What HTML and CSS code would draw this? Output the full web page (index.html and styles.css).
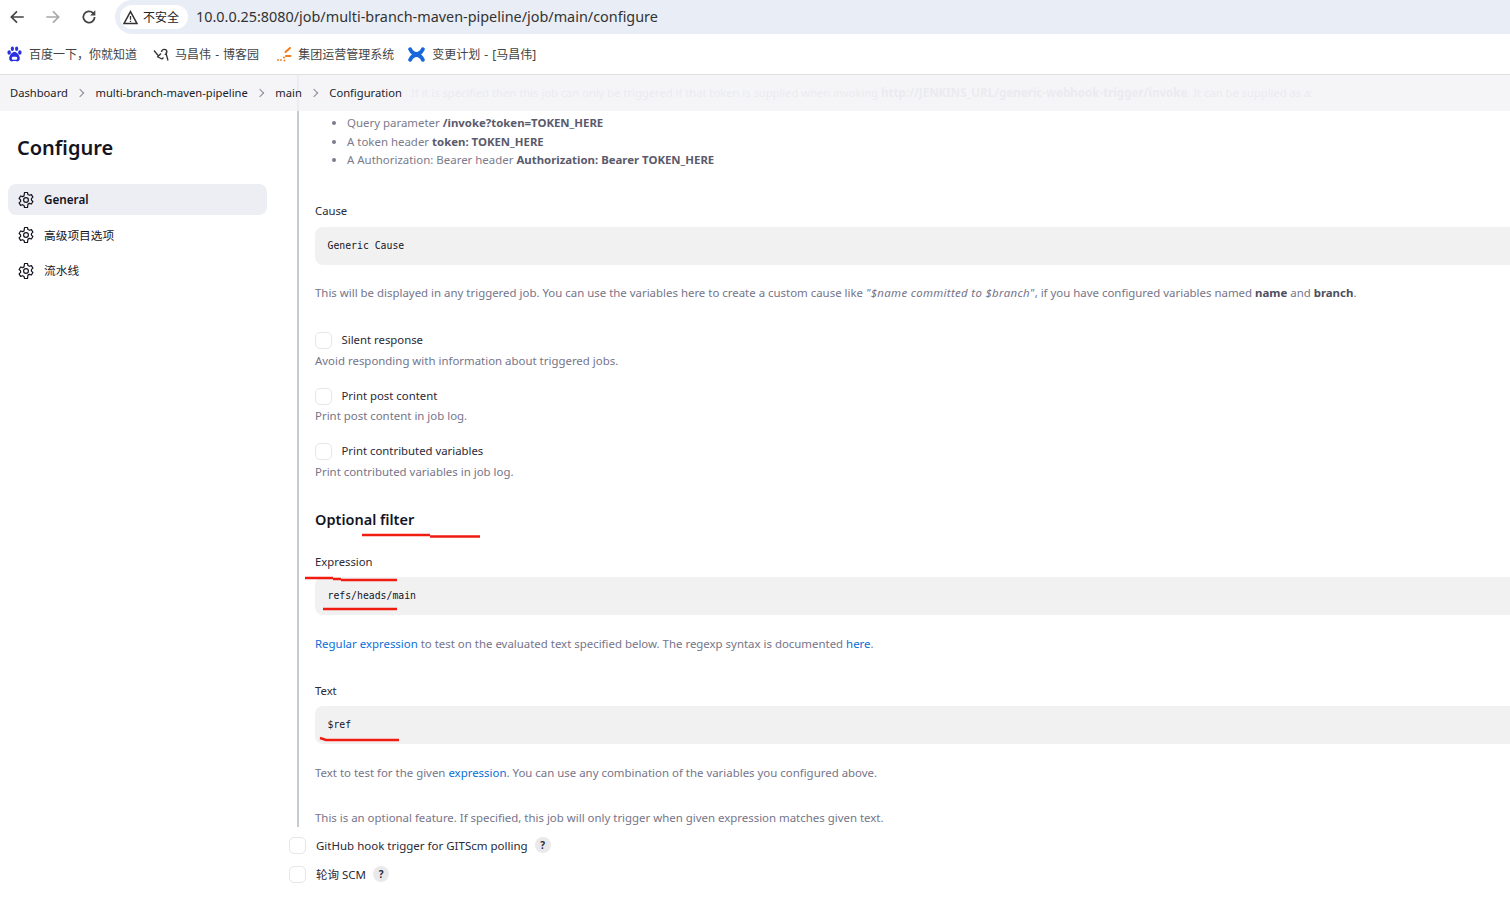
FILE: index.html
```html
<!DOCTYPE html>
<html lang="zh">
<head>
<meta charset="utf-8">
<title>main Config</title>
<link rel="stylesheet" href="styles.css">
</head>
<body>
<div class="toolbar">
  <div class="nav">
    <svg class="nav-ic" viewBox="0 0 16 16"><path d="M14 8H3M8 3 3 8l5 5" fill="none" stroke="#444" stroke-width="1.5"/></svg>
    <svg class="nav-ic" viewBox="0 0 16 16"><path d="M2 8h11M8 3l5 5-5 5" fill="none" stroke="#a8a8a8" stroke-width="1.5"/></svg>
    <svg class="nav-ic" viewBox="0 0 16 16"><path d="M13 8a5 5 0 1 1-1.500-3.600L13 6" fill="none" stroke="#444" stroke-width="1.600"/><path d="M13.600 2v4.600H9z" fill="#444"/></svg>
  </div>
  <div class="omnibox">
    <div class="chip">
      <svg class="warn" viewBox="0 0 14 14"><path d="M7 1.500 13 12.500H1z" fill="none" stroke="#333" stroke-width="1.400"/><path d="M7 5.500v3.600M7 10v1.200" stroke="#333" stroke-width="1.200"/></svg>
      <span>不安全</span>
    </div>
    <span class="url">10.0.0.25:8080/job/multi-branch-maven-pipeline/job/main/configure</span>
  </div>
</div>
<div class="bookmarks">
  <div class="bm bm-baidu">
    <svg class="bm-ic" viewBox="0 0 14 15"><g fill="#2932e1"><ellipse cx="2" cy="6" rx="1.600" ry="2.100"/><ellipse cx="5" cy="2.500" rx="1.500" ry="2.100"/><ellipse cx="9" cy="2.500" rx="1.500" ry="2.100"/><ellipse cx="12" cy="6" rx="1.600" ry="2.100"/><path d="M7 5.500c-2 0-5 3.500-5 6.200C2 14 4 14.800 5.200 14.400c1.200-.4 2.400-.4 3.600 0 1.200.4 3.200-.4 3.200-2.700C12 9 9 5.500 7 5.500z"/></g><rect x="4.500" y="10" width="5" height="3" rx="1.200" fill="#fff"/></svg>
    <span>百度一下，你就知道</span>
  </div>
  <div class="bm bm-blog">
    <svg class="bm-ic wide" viewBox="0 0 16 16"><path d="M1 4.500 5.500 10l2.500-2.500M8.500 6a2.700 2.700 0 1 1 5.400 0c0 1.200-1 2.300-2.200 2.600M12.800 6.500 15 14.500M4 10.500l5 2.500 1.500-1.500" fill="none" stroke="#333" stroke-width="1.300"/></svg>
    <span>马昌伟 - 博客园</span>
  </div>
  <div class="bm bm-ops">
    <svg class="bm-ic wide" viewBox="0 0 16 16"><g fill="none" stroke="#f07c1c" stroke-width="2" stroke-linecap="round"><path d="m9.500 6 4.500-4M10 10h4.500"/></g><g fill="#f07c1c"><circle cx="8" cy="11.500" r="1"/><circle cx="8.500" cy="14.500" r=".9"/><circle cx="5" cy="14" r=".9"/><circle cx="2" cy="14" r=".9"/></g></svg>
    <span>集团运营管理系统</span>
  </div>
  <div class="bm">
    <svg class="bm-ic large" viewBox="0 0 16 16"><path d="M2 3C5 9 11 9 14 3M2 13C5 7 11 7 14 13" fill="none" stroke="#1868db" stroke-width="3.600" stroke-linecap="round"/></svg>
    <span>变更计划 - [马昌伟]</span>
  </div>
</div>
<nav class="breadcrumb">
  <span>Dashboard</span><i class="sep"></i>
  <span>multi-branch-maven-pipeline</span><i class="sep"></i>
  <span>main</span><i class="sep"></i>
  <span>Configuration</span>
  <span class="ghost">If it is specified then this job can only be triggered if that token is supplied when invoking <b>http://JENKINS_URL/generic-webhook-trigger/invoke</b>. It can be supplied as a:</span>
</nav>
<div class="layout">
  <aside class="sidebar">
    <h1>Configure</h1>
    <ul class="side-menu">
      <li class="active">
        <svg class="gear" viewBox="0 0 24 24"><use href="#gear"/></svg>
        <span>General</span>
      </li>
      <li>
        <svg class="gear" viewBox="0 0 24 24"><use href="#gear"/></svg>
        <span>高级项目选项</span>
      </li>
      <li>
        <svg class="gear" viewBox="0 0 24 24"><use href="#gear"/></svg>
        <span>流水线</span>
      </li>
    </ul>
  </aside>
  <main class="main">
    <section class="panel">
      <ul class="tokens">
        <li>Query parameter <b>/invoke?token=TOKEN_HERE</b></li>
        <li>A token header <b>token: TOKEN_HERE</b></li>
        <li>A Authorization: Bearer header <b>Authorization: Bearer TOKEN_HERE</b></li>
      </ul>
      <div class="field cause">
        <label>Cause</label>
        <div class="input">Generic Cause</div>
        <p class="help">This will be displayed in any triggered job. You can use the variables here to create a custom cause like <em>"$name committed to $branch"</em>, if you have configured variables named <b>name</b> and <b>branch</b>.</p>
      </div>
      <div class="check check-1"><i class="box"></i><span>Silent response</span></div>
      <p class="help sub">Avoid responding with information about triggered jobs.</p>
      <div class="check check-2"><i class="box"></i><span>Print post content</span></div>
      <p class="help sub">Print post content in job log.</p>
      <div class="check check-3"><i class="box"></i><span>Print contributed variables</span></div>
      <p class="help sub">Print contributed variables in job log.</p>
      <h2>Optional filter</h2>
      <div class="field filter expr">
        <label>Expression</label>
        <div class="input">refs/heads/main</div>
        <p class="help"><a>Regular expression</a> to test on the evaluated text specified below. The regexp syntax is documented <a>here</a>.</p>
      </div>
      <div class="field filter text">
        <label>Text</label>
        <div class="input">$ref</div>
        <p class="help">Text to test for the given <a>expression</a>. You can use any combination of the variables you configured above.</p>
      </div>
      <p class="help final">This is an optional feature. If specified, this job will only trigger when given expression matches given text.</p>
    </section>
    <div class="outer-check first"><i class="box"></i><span>GitHub hook trigger for GITScm polling</span><i class="q">?</i></div>
    <div class="outer-check"><i class="box"></i><span>轮询 SCM</span><i class="q">?</i></div>
  </main>
</div>
<svg class="marks" viewBox="0 0 1510 897" aria-hidden="true">
  <path d="M362 535H430M430 536.500H480M305 578H333M333 579H341M341 580H397M323 609H397M320 738L326 740H399" fill="none" stroke="#f01c10" stroke-width="2.400"/>
</svg>
<svg class="defs" aria-hidden="true"><defs>
  <g id="gear" fill="none" stroke="#14141f" stroke-width="1.600" stroke-linejoin="round"><path d="M10 2h4l.6 2.700 2 1 2.600-.9 2 3.400-2 1.900v2l2 1.900-2 3.400-2.600-.9-2 1L14 22h-4l-.6-2.700-2-1-2.600.9-2-3.400 2-1.900v-2l-2-1.900 2-3.400 2.600.9 2-1z"/><circle cx="12" cy="12" r="3.200"/></g>
</defs></svg>
</body>
</html>
```
FILE: styles.css
```css
* { box-sizing: border-box; }
html, body { margin: 0; padding: 0; }
body {
  width: 1510px;
  height: 897px;
  overflow: hidden;
  position: relative;
  background: #fff;
  color: #14141f;
  font-family: "Noto Sans", "Noto Sans CJK SC", sans-serif;
  font-size: 11px;
}
.toolbar { height: 34px; display: flex; align-items: center; padding-left: 8px; background: #fff; }
.nav { display: flex; gap: 18px; width: 107px; }
.nav-ic { width: 18px; height: 18px; }
.omnibox {
  flex: 1; height: 34px; display: flex; align-items: center; padding-left: 5px;
  background: #e9edf6; border-radius: 17px 0 0 17px;
}
.chip {
  height: 24px; width: 68px; border-radius: 12px; background: #fff;
  display: flex; align-items: center; padding-left: 3px; gap: 5px;
  font-size: 12px; color: #222;
}
.warn { width: 15px; height: 15px; }
.url { margin-left: 8px; font-size: 14.400px; line-height: 18px; color: #333; }
.bookmarks {
  height: 41px; display: flex; align-items: center; padding-left: 7px;
  border-bottom: 1px solid #dfdfdf; font-size: 12px; color: #444; word-spacing: 1px;
}
.bm { display: flex; align-items: center; gap: 7px; }
.bm-baidu { margin-right: 16px; }
.bm-blog { margin-right: 17px; gap: 6px; }
.bm-ops { margin-right: 14px; gap: 6px; }
.bm-ic { width: 15px; height: 16px; }
.bm-ic.wide { width: 16px; height: 16px; }
.bm-ic.large { width: 17px; height: 17px; }
.breadcrumb {
  height: 36px; background: #f5f5f8; display: flex; align-items: center; padding-left: 10px;
  font-size: 11.200px; line-height: 34px; color: #1c1c28; white-space: nowrap; overflow: hidden; position: relative;
}
.breadcrumb span { position: relative; z-index: 1; }
.breadcrumb::after { content: ""; position: absolute; left: 297px; top: 0; bottom: 0; width: 2px; background: #ecedf0; }
.sep { width: 27.500px; position: relative; display: block; height: 10px; }
.sep::after {
  content: ""; position: absolute; left: 9px; top: 2px; width: 5px; height: 5px;
  border-top: 1px solid #8a8a94; border-right: 1px solid #8a8a94; transform: rotate(45deg);
}
.breadcrumb .ghost { margin-left: 9px; color: #ebebef; font-size: 11.200px; }
.ghost b { font-size: 11.600px; }
.layout { display: flex; }
.sidebar { width: 297px; padding: 0 30px 0 8px; flex: none; }
.sidebar h1 { margin: 23px 0 23px 9px; font-size: 20px; line-height: 27px; font-weight: 600; }
.side-menu { list-style: none; margin: 0; padding: 0; display: flex; flex-direction: column; gap: 4.500px; }
.side-menu li {
  height: 31px; display: flex; align-items: center; gap: 9px; padding-left: 9px;
  border-radius: 8px; font-size: 11.700px;
}
.side-menu span { margin-bottom: 2px; }
.side-menu li.active { background: #edeef3; font-weight: 600; }
.gear { width: 18px; height: 18px; }
.main { flex: 1; min-width: 0; }
.panel { border-left: 2px solid #c3ccd4; height: 716px; padding: 3px 0 0 16px; }
.tokens { margin: 0; padding: 0 0 0 32px; color: #7b7b8c; line-height: 18.400px; font-size: 11.450px; }
.tokens li:nth-child(2) { padding-top: .6px; margin-bottom: -.6px; }
.tokens b { font-weight: 700; color: #5a5a6c; font-size: 11.400px; line-height: 1; }
label { display: block; font-size: 11.300px; line-height: 15px; color: #2a2a38; }
.cause { margin-top: 34px; }
.input {
  height: 38px; margin-top: 9px; padding: 0 0 2px 12.500px; background: #f1f1f1; border-radius: 8px 0 0 8px;
  display: flex; align-items: center; font-family: "DejaVu Sans Mono", monospace; font-size: 9.800px; color: #14141f;
}
.help { margin: 20px 0 0; font-size: 11.430px; line-height: 15px; color: #75758a; white-space: nowrap; }
.help b { font-weight: 700; color: #4e4e60; }
.help em { font-style: italic; letter-spacing: .32px; }
.help a { color: #0a6fd8; }
.check { display: flex; align-items: center; gap: 9.500px; height: 18px; font-size: 11.350px; color: #2a2a38; }
.box { display: block; width: 17px; height: 17px; border: 1px solid #e6e6eb; border-radius: 5px; background: #fff; flex: none; }
.check .box { margin-top: 2px; }
.check-1 { margin-top: 30px; }
.check-2 { margin-top: 18px; }
.check-3 { margin-top: 18px; }
.help.sub { margin-top: 5px; }
.check-2 + .help.sub { margin-top: 4px; }
h2 { margin: 30px 0 0; font-size: 14.500px; line-height: 20px; font-weight: 600; }
.filter .input { margin-top: 8px; }
.filter .help { margin-top: 21px; }
.expr { margin-top: 25px; }
.text { margin-top: 32px; }
.help.final { margin-top: 30px; }
.outer-check { display: flex; align-items: center; height: 18px; font-size: 11.500px; color: #2a2a38; margin-left: -8px; margin-top: 11px; }
.outer-check.first { margin-top: 9px; }
.outer-check .box { margin-right: 10px; }
.q {
  width: 16px; height: 16px; margin-left: 7px; border-radius: 50%; background: #e9e9ec;
  font-style: normal; font-size: 10px; font-weight: 700; display: flex; align-items: center; justify-content: center;
}
.marks { position: absolute; left: 0; top: 0; width: 1510px; height: 897px; pointer-events: none; }
.defs { position: absolute; width: 0; height: 0; }
```
